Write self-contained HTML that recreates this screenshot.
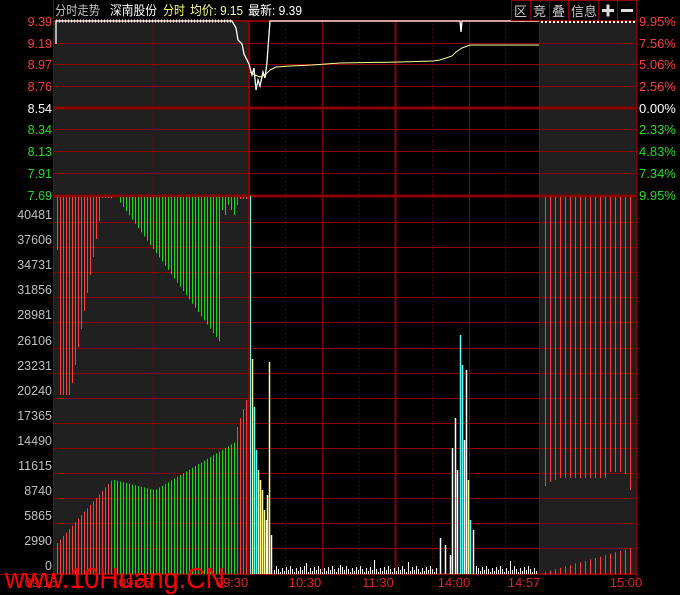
<!DOCTYPE html>
<html><head><meta charset="utf-8"><style>
html,body{margin:0;padding:0;background:#000;width:680px;height:595px;overflow:hidden}
svg{display:block}
text{font-family:"Liberation Sans","Noto Sans CJK SC",sans-serif}
</style></head><body>
<svg id="s" width="680" height="595" xmlns="http://www.w3.org/2000/svg">
<rect width="680" height="595" fill="#000"/>
<rect x="54" y="21" width="195" height="553" fill="#202020"/>
<rect x="539" y="21" width="98" height="553" fill="#202020"/>
<g id="grid" stroke="#8b0000" stroke-width="1"></g>
<g id="bars"></g>
<g id="lines" fill="none"></g>
<g font-size="12.5" text-anchor="end">
<text x="52" y="26" fill="#ff3b3b">9.39</text>
<text x="52" y="48" fill="#ff3b3b">9.19</text>
<text x="52" y="69" fill="#ff3b3b">8.97</text>
<text x="52" y="91" fill="#ff3b3b">8.76</text>
<text x="52" y="113" fill="#fff">8.54</text>
<text x="52" y="134" fill="#22dd22">8.34</text>
<text x="52" y="156" fill="#22dd22">8.13</text>
<text x="52" y="178" fill="#22dd22">7.91</text>
<text x="52" y="200" fill="#22dd22">7.69</text>
</g>
<g font-size="12.5" fill="#c0c0c0" text-anchor="end" id="vl"></g>
<g font-size="13">
<text x="639" y="26" fill="#ff3b3b">9.95%</text>
<text x="639" y="48" fill="#ff3b3b">7.56%</text>
<text x="639" y="69" fill="#ff3b3b">5.06%</text>
<text x="639" y="91" fill="#ff3b3b">2.56%</text>
<text x="639" y="113" fill="#fff">0.00%</text>
<text x="639" y="134" fill="#22dd22">2.33%</text>
<text x="639" y="156" fill="#22dd22">4.83%</text>
<text x="639" y="178" fill="#22dd22">7.34%</text>
<text x="639" y="200" fill="#22dd22">9.95%</text>
</g>
<g font-size="13">
<text x="55" y="15" fill="#c0c0c0" textLength="45" lengthAdjust="spacingAndGlyphs">分时走势</text>
<text x="110" y="15" fill="#fff" textLength="47" lengthAdjust="spacingAndGlyphs">深南股份</text>
<text x="163" y="15" fill="#ffff66" textLength="22" lengthAdjust="spacingAndGlyphs">分时</text>
<text x="190" y="15" fill="#ffff99" textLength="53" lengthAdjust="spacingAndGlyphs">均价: 9.15</text>
<text x="248" y="15" fill="#ffffff" textLength="54" lengthAdjust="spacingAndGlyphs">最新: 9.39</text>
</g>
<g stroke="#8b0000" fill="none">
<rect x="511.5" y="0.5" width="125" height="20"/>
<line x1="530.5" y1="0" x2="530.5" y2="21"/>
<line x1="549.5" y1="0" x2="549.5" y2="21"/>
<line x1="568.5" y1="0" x2="568.5" y2="21"/>
<line x1="598.5" y1="0" x2="598.5" y2="21"/>
<line x1="617.5" y1="0" x2="617.5" y2="21"/>
</g>
<g font-size="13" fill="#c8c8c8">
<text x="514" y="16">区</text><text x="533" y="16">竞</text><text x="552" y="16">叠</text><text x="571" y="16">信息</text>
</g>
<rect x="602" y="9" width="12" height="3" fill="#ddd"/><rect x="606.5" y="4.5" width="3" height="12" fill="#ddd"/>
<rect x="621" y="9" width="12" height="3" fill="#ddd"/>
<g font-size="13" fill="#dd2222" text-anchor="middle">
<text x="41" y="587">09:15</text><text x="135" y="587">09:25</text><text x="232" y="587">09:30</text>
<text x="305" y="587">10:30</text><text x="378" y="587">11:30</text><text x="454" y="587">14:00</text>
<text x="524" y="587">14:57</text><text x="626" y="587">15:00</text>
</g>
<text x="5" y="588" font-size="29" fill="#ff0000" textLength="220" lengthAdjust="spacingAndGlyphs">www.10Huang.CN</text>
</svg>
<script>
var NS="http://www.w3.org/2000/svg";
function el(p,t,a){var e=document.createElementNS(NS,t);for(var k in a)e.setAttribute(k,a[k]);document.getElementById(p).appendChild(e);return e;}
function L(p,x1,y1,x2,y2,c,w,d){var a={x1:x1,y1:y1,x2:x2,y2:y2,stroke:c,"stroke-width":w||1};if(d)a["stroke-dasharray"]=d;el(p,"line",a);}
[43,64,86,129,151,173].forEach(function(y){L("grid",54,y+.5,637,y+.5,"#8b0000");});
L("grid",54,21,637,21,"#8b0000",2);L("grid",54,108,637,108,"#8b0000",3);L("grid",54,196,637,196,"#8b0000",3);
for(var y=222;y<=574;y+=25.1){L("grid",54,Math.round(y)+.5,637,Math.round(y)+.5,"#8b0000");}
L("grid",0,574.5,637,574.5,"#8b0000");
L("grid",53.5,0,53.5,574,"#8b0000");L("grid",636.5,0,636.5,578,"#8b0000");
L("grid",249,21,249,574,"#8b0000",2);L("grid",539.5,21,539.5,574,"#8b0000");
[322.5,469.5].forEach(function(x){L("grid",x,21,x,574,"#8b0000");});L("grid",395.5,21,395.5,574,"#8b0000",2);
[152.5,285.5,359.5,432.5,505.5].forEach(function(x){L("grid",x,21,x,574,"#8b0000",1,"1 3");});
var vl=["40481","37606","34731","31856","28981","26106","23231","20240","17365","14490","11615","8740","5865","2990","0"];
vl.forEach(function(t,i){var e=el("vl","text",{x:52,y:Math.round(222+i*25.1-3)});e.textContent=t;});
var red="#ff3b3b",grn="#11dd11";
for(var i=0;i<64;i++){var x=57+i*3;var c=x<114?red:(x<236?grn:red);
 var bt; if(x<114) bt=543-(x-57)*(66/57); else if(x<155) bt=480+(x-114)*0.25; else if(x<236) bt=490-(x-155)*0.6; else bt=430-(x-236)*3;
 L("bars",x+.5,574,x+.5,bt,c);
 var tp; if(x<58)tp=250; else if(x<70) tp=395; else if(x<100) tp=395-(x-70)*6; else if(x<114) tp=200; else if(x<118) tp=197; else if(x<222) tp=200+(x-118)*1.4; else tp=205+(i%3)*5;
 if(x>=100&&x<114)tp=198; if(x>=240) tp=199; L("bars",x+.5,197,x+.5,tp,c);}
var post=[486,482,480,478,478,478,478,478,478,478,478,478,478,472,472,472,474,490];
for(var i=0;i<18;i++){var x=545+i*5;L("bars",x+.5,197,x+.5,post[i],red);L("bars",x+.5,574,x+.5,572-i*1.4,red);}
L("bars",250.5,196,250.5,574,"#55ffff");
var spikes=[[252,359,"#ffff99"],[254,407,"#55ffff"],[256,450,"#55ffff"],[258,470,"#ffff99"],[260,480,"#ffff99"],[262,490,"#ffff99"],[264,510,"#ffff99"],[266,520,"#fff"],[267,495,"#ffff99"],[269,362,"#ffff99"],[271,535,"#fff"],
[440,538,"#fff"],[445,545,"#fff"],[450,555,"#fff"],[452,448,"#fff"],[455,418,"#fff"],[457,470,"#fff"],[460,335,"#55ffff"],[462,365,"#55ffff"],[464,440,"#fff"],[466,370,"#fff"],[468,480,"#ffff99"],[470,520,"#55ffff"],[473,530,"#fff"]];
spikes.forEach(function(s){L("bars",s[0]+.5,574,s[0]+.5,s[1],s[2],1.5);});
for(var x=274;x<538;x+=2){if(x>437&&x<476)continue;var h=2+((x*7919)%7);if((x*13)%17==0)h+=6;L("bars",x+.5,574,x+.5,574-h,"#fff");}
el("lines","path",{d:"M56 44 L56 21 L232 21 L236 28 L238 40 L242 44 L244 54 L247 60 L249 64 L252 75 L254 68 L256 90 L258 80 L260 86 L263 72 L265 78 L267 62 L268 48 L270 21 L460 21 L461 32 L462 21 L539 21",stroke:"#fff","stroke-width":1.3});
el("lines","path",{d:"M56 21 L232 21",stroke:"#fff","stroke-width":3,"stroke-dasharray":"1 2"});
el("lines","path",{d:"M541 22 L636 22",stroke:"#fff","stroke-width":2,"stroke-dasharray":"2 2"});
el("lines","path",{d:"M250 72 L255 75 L260 77 L265 75 L270 70 L276 67 L290 66 L312 65 L340 63 L400 62 L433 61 L440 60 L452 56 L456 52 L462 48 L470 45 L539 45",stroke:"#ffff99","stroke-width":1});
</script>
</body></html>
